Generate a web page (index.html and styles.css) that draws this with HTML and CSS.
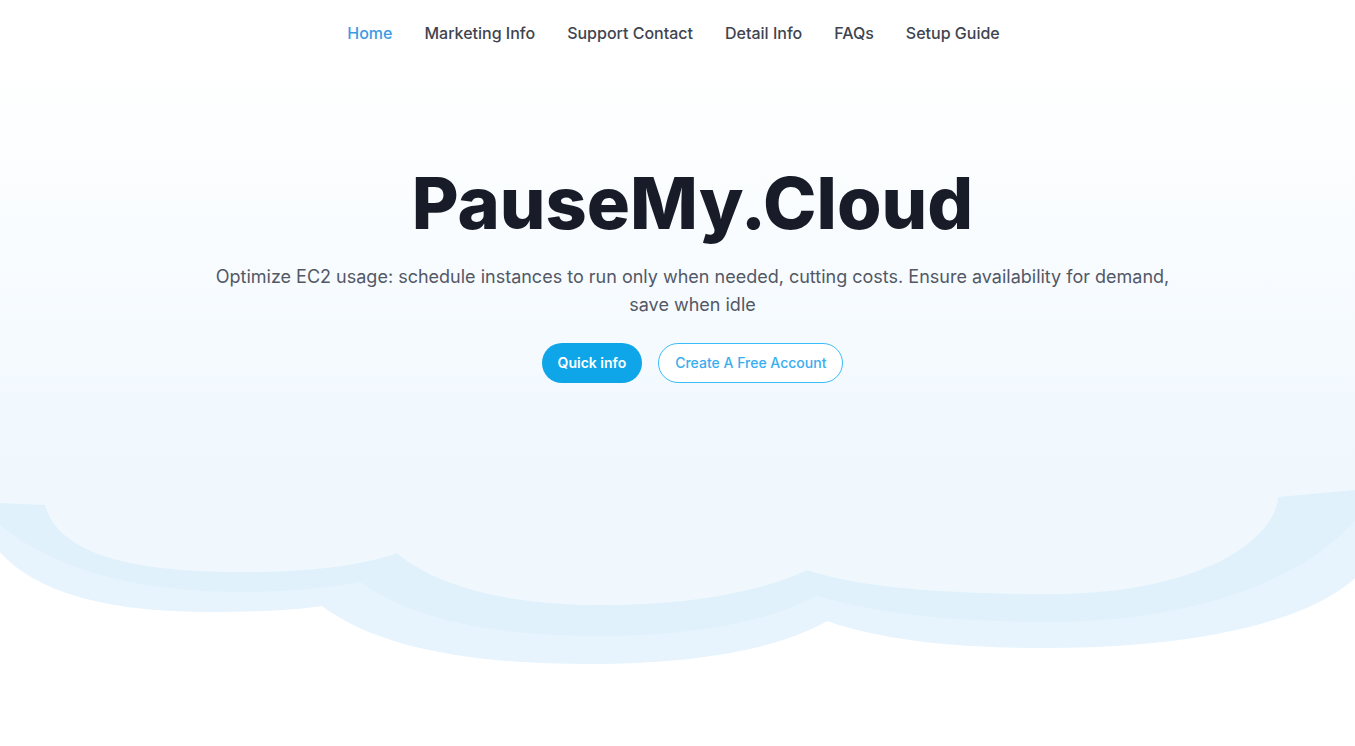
FILE: index.html
```html
<!DOCTYPE html>
<html lang="en">
<head>
<meta charset="utf-8">
<title>PauseMy.Cloud</title>
<link rel="stylesheet" href="styles.css">
</head>
<body>
<header class="site-header">
  <nav class="main-nav">
    <a class="nav-link active" href="#">Home</a>
    <a class="nav-link" href="#">Marketing Info</a>
    <a class="nav-link" href="#">Support Contact</a>
    <a class="nav-link" href="#">Detail Info</a>
    <a class="nav-link" href="#">FAQs</a>
    <a class="nav-link" href="#">Setup Guide</a>
  </nav>
</header>
<section class="hero">
  <div class="hero-content">
    <h1 class="hero-title">PauseMy.Cloud</h1>
    <p class="hero-text">Optimize EC2 usage: schedule instances to run only when needed, cutting costs. Ensure availability for demand, save when idle</p>
    <div class="hero-actions">
      <a class="btn btn-primary" href="#">Quick info</a>
      <a class="btn btn-outline" href="#">Create A Free Account</a>
    </div>
  </div>
  <svg class="hero-clouds" viewBox="0 470 1355 230" preserveAspectRatio="none" aria-hidden="true">
    <rect x="0" y="470" width="1355" height="230" fill="#ffffff"/>
    <path fill="#e7f4fd" d="M0,470 L0,552 C40,597 120,612 210,612 C260,612 295,610 322,606 C380,650 480,664 590,664 C700,664 780,648 827,621 C890,643 970,648 1050,648 C1200,648 1310,620 1355,578 L1355,470 Z"/>
    <path fill="#e1f1fc" d="M0,470 L0,525 C60,575 150,592 240,592 C290,592 330,588 360,582 C420,625 510,636 600,636 C700,636 770,620 817,596 C880,615 960,622 1050,622 C1200,622 1310,575 1355,520 L1355,470 Z"/>
    <path fill="#f0f8fe" d="M0,470 L0,503 L45,505 C60,560 150,572 240,572 C310,572 360,566 397,553 C440,590 520,605 600,605 C690,605 760,592 807,570 C860,588 950,594 1050,594 C1200,594 1275,540 1278,497 L1355,490 L1355,470 Z"/>
  </svg>
</section>
</body>
</html>
```
FILE: styles.css
```css
* { box-sizing: border-box; }

body {
  margin: 0;
  font-family: Inter, "Noto Sans", sans-serif;
  background: #ffffff;
  color: #1f2937;
}

.site-header {
  background: #ffffff;
}

.main-nav {
  display: flex;
  justify-content: center;
  gap: 32px;
  padding: 21px 8px 21px 0;
}

.nav-link {
  font-size: 16px;
  line-height: 24px;
  font-weight: 500;
  color: #40444f;
  text-decoration: none;
}

.nav-link.active {
  color: #3b9be3;
}

.hero {
  background: linear-gradient(to bottom, #ffffff 0px, #f0f8fe 400px, #f0f8fe 100%);
}

.hero-content {
  display: flex;
  flex-direction: column;
  align-items: center;
  padding: 101px 0 0 30px;
  text-align: center;
}

.hero-title {
  margin: 0;
  font-size: 72px;
  line-height: 72px;
  font-weight: 800;
  color: #171c28;
}

.hero-text {
  margin: 24px 0 0;
  max-width: 960px;
  font-size: 18px;
  line-height: 28px;
  color: #525866;
}

.hero-actions {
  display: flex;
  gap: 16px;
  margin-top: 24px;
}

.btn {
  display: inline-flex;
  align-items: center;
  height: 40px;
  padding: 0 16px 1px;
  border-radius: 999px;
  font-size: 14px;
  text-decoration: none;
}

.btn-primary {
  background: #0ea5e9;
  color: #ffffff;
  font-weight: 600;
}

.btn-outline {
  background: #ffffff;
  border: 1px solid #38bdf8;
  color: #38aef0;
  font-weight: 500;
}

.hero-clouds {
  display: block;
  width: 100%;
  height: 230px;
  margin-top: 87px;
}
```
